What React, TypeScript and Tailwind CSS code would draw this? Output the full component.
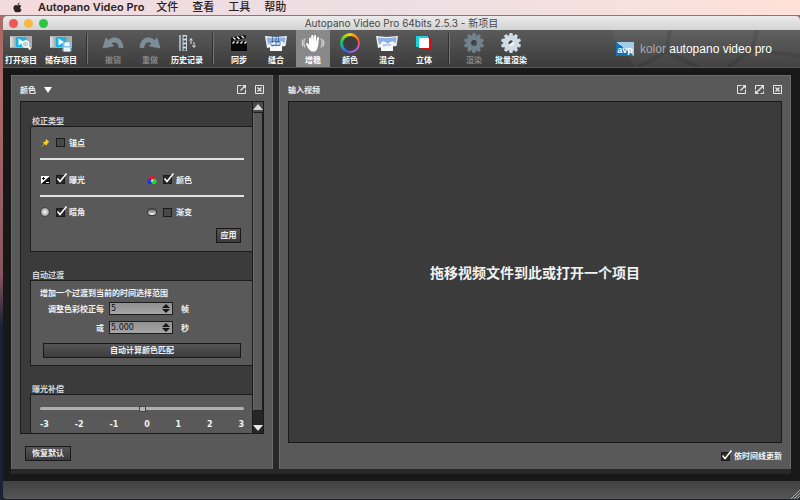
import { useState, type ReactNode } from "react";
import { FaApple } from "react-icons/fa";
import clsx from "clsx";

function FilmIcon({ children }: { children?: ReactNode }) {
  return (
    <svg viewBox="0 0 24 18" className="h-[18px] w-6">
      <defs>
        <linearGradient id="film" x1="0" x2="1">
          <stop offset="0" stopColor="#e2e6e8" />
          <stop offset=".35" stopColor="#8b9499" />
          <stop offset="1" stopColor="#aab0b4" />
        </linearGradient>
      </defs>
      <path d="M1 2h22v12H1z" fill="url(#film)" />
      <path d="M1 2.500h22M1 13.500h22" stroke="#a9b1b5" />
      <path d="M7 3h10v10H7z" fill="#18b4e4" />
      <path d="M9.500 4.500l5.500 3.500-5.500 3.500z" fill="#fff" />
      {children}
    </svg>
  );
}

function OpenIcon() {
  return (
    <FilmIcon>
      <path d="M18.500 12l3 3.500" stroke="#f2f2f2" strokeWidth="2" />
      <circle cx="16.500" cy="10" r="3.200" fill="#c3d3d9" stroke="#fff" strokeWidth="1.200" />
    </FilmIcon>
  );
}

function SaveIcon() {
  return (
    <FilmIcon>
      <path d="M13.500 8.500h9v9h-9z" fill="#86bfe3" />
      <path d="M15.500 8.500h5v3.500h-5z" fill="#f4fafd" />
      <path d="M15 13.500h6v4h-6z" fill="#eaf3f9" />
    </FilmIcon>
  );
}

function UndoIcon({ flip }: { flip?: boolean }) {
  return (
    <svg viewBox="0 0 24 18" className={clsx("h-[18px] w-6", flip && "-scale-x-100")}>
      <path
        d="M2 14L5 4l2.500 2.500C11 3 16 3 19 6c2 2 3 4.500 3 7.500h-4c0-2.500-.8-4-2.500-5-2-1-3.800-.5-5.200.8L12.500 12z"
        fill="#7a8d99"
        stroke="#91a2ac"
        strokeWidth=".5"
      />
    </svg>
  );
}

function HistoryIcon() {
  return (
    <svg viewBox="0 0 24 18" className="h-[18px] w-6">
      <path d="M5 1v16" stroke="#e4e8eb" strokeWidth="1.200" />
      <path d="M7.500 1h4.500v16H7.500z" fill="#c9d6df" />
      <path d="M8.500 2.500h2.500v2H8.500zM8.500 6.500h2.500v2H8.500zM8.500 10.500h2.500v2H8.500zM8.500 14.500h2.500v2H8.500z" fill="#39444c" />
      <path d="M16 5v5M14.500 6.500L16 4.500l1.500 2M19 8v5M17.500 11.500l1.500 2 1.500-2" fill="none" stroke="#e2e2e2" />
    </svg>
  );
}

function ClapIcon() {
  return (
    <svg viewBox="0 0 24 18" className="h-[18px] w-6">
      <path d="M4 7h16v10H4z" fill="#080808" />
      <path d="M4 3.500L18.500 1l.8 3L4.500 7z" fill="#080808" />
      <path d="M6 3.500l2.500 2M10 2.800l2.500 2M14.500 2l2.500 2" stroke="#eee" strokeWidth="1.500" />
      <path d="M5.500 9.500l2-2M9.500 9.500l2-2M13.500 9.500l2-2M17.500 9.500l2-2" stroke="#eee" strokeWidth="1.500" />
    </svg>
  );
}

function PhotosIcon({ merged }: { merged?: boolean }) {
  return (
    <svg viewBox="0 0 24 18" className="h-[18px] w-6">
      <path d="M1 2l11 1v9l-9 2z" fill="#f2f5f9" />
      <path d="M11 3l12-1-1.500 10-10 1z" fill="#eef2f8" />
      <path d="M6 8h12v9H6z" fill="#f6f8fa" />
      <path d="M2.500 3.500L12 4v5l-4-2-4 4zM12 4l9.500-.8-.8 6L17 7l-5 3z" fill="#8fb0e3" />
      <path d="M8 10h8v2l-4-.5-4 1.500z" fill="#b3c8ec" />
      {!merged && (
        <path d="M8.500 9V2.500h6V9M7 11.500V7.500h9v4zM12 3v9" fill="none" stroke="#4a6396" strokeWidth=".8" />
      )}
    </svg>
  );
}

function HandIcon() {
  return (
    <svg viewBox="0 0 24 18" className="h-[18px] w-6">
      <path
        d="M8 10V4.500a1 1 0 0 1 2 0V8l.3-6a1 1 0 0 1 2 0V7.500l.7-5.500a1 1 0 0 1 2 0V8l1-4a1 1 0 0 1 2 0l-.6 6c-.2 3-1.500 6.500-3.400 7.500h-3.500C8 16 6 12.500 5 10c0-1.500 1.700-1.500 3 1z"
        fill="#fff"
      />
      <path d="M4 4.500c-1.500 2.500-1.500 6 0 9M2 5.500c-1 2-1 5 0 7M20 4.500c1.500 2.500 1.500 6 0 9M22 5.500c1 2 1 5 0 7" fill="none" stroke="#eee" strokeWidth=".9" />
    </svg>
  );
}

function RingIcon() {
  return (
    <span className="flex h-5 w-5 items-center justify-center rounded-full bg-[conic-gradient(#ffd400,#ff8a00,#ff4a30,#b55cf0,#c45cff,#3a5cff,#1c9cd8,#1fc34a,#7ddb20,#ffd400)]">
      <span className="h-[15px] w-[15px] rounded-full bg-[#3d3d3f]" />
    </span>
  );
}

function StereoIcon() {
  return (
    <svg viewBox="0 0 24 18" className="h-[18px] w-6">
      <path d="M9 4h11v12H9z" fill="#d81010" />
      <path d="M4 2h12v11H4z" fill="#19d3dc" />
      <path d="M7 4h10v10H7z" fill="#fff" />
    </svg>
  );
}

const teeth = [0, 36, 72, 108, 144, 180, 216, 252, 288, 324];

function GearIcon({ dim }: { dim?: boolean }) {
  const fill = dim ? "#72828c" : "#cfdce5";
  return (
    <svg viewBox="0 0 24 20" className="h-5 w-6">
      {teeth.map((angle) => (
        <path key={angle} d="M9.800 3.500L10.600 0h2.800l.8 3.500z" fill={fill} transform={`rotate(${angle} 12 10)`} />
      ))}
      <circle cx="12" cy="10" r="7.800" fill={fill} />
      <circle cx="12" cy="10" r="3" fill={dim ? "#474b4e" : "#f3f7fa"} />
      <path d="M10 11.500a2.500 2.500 0 0 1 4-3z" fill="#3c4145" />
    </svg>
  );
}

type Tool = { label: string; icon: ReactNode; disabled?: boolean; active?: boolean };

const toolGroups: Tool[][] = [
  [
    { label: "打开项目", icon: <OpenIcon /> },
    { label: "储存项目", icon: <SaveIcon /> },
  ],
  [
    { label: "撤销", icon: <UndoIcon />, disabled: true },
    { label: "重做", icon: <UndoIcon flip />, disabled: true },
    { label: "历史记录", icon: <HistoryIcon /> },
  ],
  [
    { label: "同步", icon: <ClapIcon /> },
    { label: "缝合", icon: <PhotosIcon /> },
    { label: "增稳", icon: <HandIcon />, active: true },
    { label: "颜色", icon: <RingIcon /> },
    { label: "混合", icon: <PhotosIcon merged /> },
    { label: "立体", icon: <StereoIcon /> },
  ],
  [
    { label: "渲染", icon: <GearIcon dim />, disabled: true },
    { label: "批量渲染", icon: <GearIcon /> },
  ],
];

function Toolbar() {
  return (
    <div className="relative flex h-[38px] shrink-0 items-stretch border-b border-[#2f5f93] bg-linear-to-b from-[#5a5a5a] to-[#3c3c3c] pl-px">
      <svg viewBox="0 0 190 37" className="absolute top-0 right-0 h-[37px] w-[190px]">
        <path d="M4 0h186v37H26L2 6z" fill="#fff" opacity=".04" />
        <path d="M60 0l-4 22-28 15M56 22l32 15M147 0l-5 20-24 17M142 20l48 6" fill="none" stroke="#000" strokeWidth="4" opacity=".09" />
      </svg>
      {toolGroups.map((group, i) => (
        <div key={i} className="flex">
          {i > 0 && (
            <div className={clsx("my-[3px] w-0.5 border-r border-[#747474] bg-[#2f2f2f]", i === 3 ? "mx-[7px]" : "mx-2")} />
          )}
          <div className={clsx("flex", i === 0 ? "gap-1.5" : "gap-[3px]")}>
            {group.map((tool) => (
              <button
                key={tool.label}
                disabled={tool.disabled}
                className={clsx(
                  "flex w-[34px] flex-col items-center whitespace-nowrap pt-[3px] font-bold",
                  tool.active && "bg-[#898989]",
                  tool.disabled ? "text-[#858585]" : "text-white"
                )}
              >
                <span className="flex h-5 items-center justify-center">{tool.icon}</span>
                <span className="leading-[14px]">{tool.label}</span>
              </button>
            ))}
          </div>
        </div>
      ))}
      <div className="relative mr-7 ml-auto flex items-center gap-1.5 text-[12px] text-[#a9a9a9] [font-family:'Liberation_Sans',Arial,sans-serif]">
        <span className="flex h-[14px] w-[18px] items-end justify-center bg-linear-to-tr from-[#1173b5] from-50% to-[#9fcdea] to-50% text-[9px] leading-[12px] font-bold text-white">
          avp
        </span>
        <span>
          kolor <span className="text-white">autopano video pro</span>
        </span>
      </div>
    </div>
  );
}

function PopOutIcon() {
  return (
    <svg viewBox="0 0 9 9" className="h-[9px] w-[9px]" fill="none" stroke="#e6e6e6">
      <path d="M4.500 .5h-4v8h8v-4" />
      <path d="M3.500 5.500l4-4" strokeWidth="1.300" />
      <path d="M5 0h4v4z" fill="#e6e6e6" stroke="none" />
    </svg>
  );
}

function ExpandIcon() {
  return (
    <svg viewBox="0 0 9 9" className="h-[9px] w-[9px]" fill="none" stroke="#e6e6e6">
      <path d="M.5 .5h8v8h-8z" strokeDasharray="5 2" />
      <path d="M2 7l5-5" strokeWidth="1.500" />
      <path d="M5 0h4v4zM0 5v4h4z" fill="#e6e6e6" stroke="none" />
    </svg>
  );
}

function CloseIcon() {
  return (
    <svg viewBox="0 0 9 9" className="h-[9px] w-[9px]" fill="none" stroke="#e6e6e6">
      <path d="M.5 .5h8v8h-8z" />
      <path d="M2.500 2.500l4 4M6.500 2.500l-4 4" strokeWidth="1.300" />
    </svg>
  );
}

function Check({ label, checked = false }: { label: string; checked?: boolean }) {
  const [on, setOn] = useState(checked);
  return (
    <label className="flex items-center gap-1">
      <span className="relative flex">
        <input
          type="checkbox"
          checked={on}
          onChange={() => setOn(!on)}
          className={clsx("h-[9px] w-[9px] appearance-none border border-[#1b1b1b]", on ? "bg-[#2a2a2a]" : "bg-[#484848]")}
        />
        {on && (
          <svg viewBox="0 0 12 11" className="pointer-events-none absolute -top-0.5 left-0 h-[11px] w-3">
            <path d="M1.500 5.500L4 8.500l6.500-8" fill="none" stroke="#fff" strokeWidth="1.500" />
          </svg>
        )}
      </span>
      {label}
    </label>
  );
}

function PinIcon() {
  return (
    <svg viewBox="0 0 10 10" className="h-2.5 w-2.5">
      <path d="M2 8.500L4.500 6" stroke="#d8ae1c" />
      <path d="M6 1l3.500 3-1.500.5L6.500 7.500 2.500 4.500l3-1z" fill="#ffd21c" />
    </svg>
  );
}

function ExposureIcon() {
  return (
    <svg viewBox="0 0 10 10" className="h-2.5 w-2.5">
      <path d="M1 1h9v8H1z" fill="#111" />
      <path d="M1 1h9L1 9z" fill="#fff" />
      <path d="M3.500 2v3M2 3.500h3" stroke="#111" />
      <path d="M6 7.500h3" stroke="#fff" />
    </svg>
  );
}

function RgbIcon() {
  return (
    <svg viewBox="0 0 10 10" className="h-2.5 w-2.5">
      <circle cx="5" cy="3.500" r="2.700" fill="#f0142c" />
      <circle cx="3.200" cy="6.500" r="2.700" fill="#2030f0" />
      <circle cx="6.900" cy="6.500" r="2.700" fill="#1ddc2a" />
      <circle cx="5" cy="5.500" r="1" fill="#fff" />
    </svg>
  );
}

function Group({ title, className, children }: { title: string; className?: string; children: ReactNode }) {
  return (
    <fieldset className="pl-[9px]">
      <legend className="pl-0.5 leading-[10px] text-[#d6d6d6]">{title}</legend>
      <div className={clsx("border border-r-0 border-[#1c1c1c] bg-[#595959] pr-2 pl-[9px]", className)}>{children}</div>
    </fieldset>
  );
}

const darkButton =
  "border border-[#191919] bg-linear-to-b from-[#555] to-[#3c3c3c] leading-[13px] font-bold text-[#f0f0f0]";

function Spinner({ id, label, unit, value }: { id: string; label: string; unit: string; value: string }) {
  const [text, setText] = useState(value);
  return (
    <div className="flex h-[19px] items-center">
      <label htmlFor={id} className="w-16 text-right">
        {label}
      </label>
      <div className="ml-[5px] flex h-[13px] w-16 items-center border border-[#1d1d1d] bg-linear-to-b from-[#919191] to-[#a6a6a6]">
        <input
          id={id}
          value={text}
          onChange={(e) => setText(e.target.value)}
          className="min-w-0 flex-1 pl-px font-normal text-[#111] outline-none [font-family:'DejaVu_Sans',sans-serif]"
        />
        <div className="flex w-3 flex-col items-center gap-px">
          <button aria-label={`增加${unit}`} className="block">
            <svg viewBox="0 0 8 4" className="block h-1 w-2"><path d="M0 4l4-4 4 4z" fill="#161616" /></svg>
          </button>
          <button aria-label={`减少${unit}`} className="block">
            <svg viewBox="0 0 8 4" className="block h-1 w-2"><path d="M0 0l4 4 4-4z" fill="#161616" /></svg>
          </button>
        </div>
      </div>
      <span className="ml-2">{unit}</span>
    </div>
  );
}

function ColorPanel() {
  const [shift, setShift] = useState(0);
  return (
    <section className="flex w-[262px] shrink-0 flex-col border border-b-0 border-[#6b6b6b] bg-[#595959] px-2">
      <header className="flex h-[25px] items-center pt-0.5">
        <h2 className="mr-2">颜色</h2>
        <svg viewBox="0 0 8 6" className="h-1.5 w-2"><path d="M0 0h8L4 6z" fill="#fff" /></svg>
        <div className="ml-auto flex gap-[9px]">
          <button aria-label="弹出"><PopOutIcon /></button>
          <button aria-label="关闭"><CloseIcon /></button>
        </div>
      </header>
      <div className="flex h-[333px] border border-[#1a1a1a] bg-[#3b3b3b]">
        <div className="flex min-w-0 flex-1 flex-col gap-[18px] overflow-hidden pt-[14px]">
          <Group title="校正类型" className="h-[126px]">
            <div className="flex h-[31px] items-center gap-1.5"><PinIcon /><Check label="锚点" /></div>
            <hr className="border-t-2 border-[#e2e2e2]" />
            <div className="grid h-[35px] grid-cols-2 items-center pt-1">
              <div className="flex items-center gap-1.5"><ExposureIcon /><Check label="曝光" checked /></div>
              <div className="ml-[5px] flex items-center gap-1.5"><RgbIcon /><Check label="颜色" checked /></div>
            </div>
            <hr className="border-t-2 border-[#e2e2e2]" />
            <div className="grid h-[30px] grid-cols-2 items-center">
              <div className="flex items-center gap-1.5">
                <span className="h-2.5 w-2.5 rounded-full border border-[#444] bg-radial from-white to-[#777]" />
                <Check label="暗角" checked />
              </div>
              <div className="ml-[5px] flex items-center gap-1.5">
                <span className="h-2 w-2.5 rounded-full border border-[#333] bg-linear-to-b from-[#555] to-white" />
                <Check label="渐变" />
              </div>
            </div>
            <div className="flex justify-end pt-px pr-[3px]">
              <button className={clsx(darkButton, "w-[25px]")}>应用</button>
            </div>
          </Group>
          <Group title="自动过渡" className="h-[86px] pt-1.5">
            <p className="leading-3">增加一个过渡到当前的时间选择范围</p>
            <Spinner id="frames" label="调整色彩校正每" unit="帧" value="5" />
            <Spinner id="seconds" label="或" unit="秒" value="5.000" />
            <div className="px-[3px] pt-1.5">
              <button className={clsx(darkButton, "w-full")}>自动计算颜色匹配</button>
            </div>
          </Group>
          <Group title="曝光补偿" className="h-[60px] pt-3">
            <input
              type="range"
              min={-3}
              max={3}
              step={0.1}
              value={shift}
              onChange={(e) => setShift(Number(e.target.value))}
              aria-label="曝光补偿"
              className="block h-[3px] w-full appearance-none rounded-full bg-[#b0b0b0] [&::-webkit-slider-thumb]:h-[6px] [&::-webkit-slider-thumb]:w-[7px] [&::-webkit-slider-thumb]:appearance-none [&::-webkit-slider-thumb]:border [&::-webkit-slider-thumb]:border-[#444] [&::-webkit-slider-thumb]:bg-[#b5b5b5]"
            />
            <div className="flex justify-between pt-[9px] leading-3 [font-family:'DejaVu_Sans',sans-serif]">
              {["-3", "-2", "-1", "0", "1", "2", "3"].map((n) => (
                <span key={n}>{n}</span>
              ))}
            </div>
          </Group>
        </div>
        <div className="flex w-[11px] flex-col border-l border-[#1a1a1a] bg-[#262626]">
          <button aria-label="向上" className="flex h-2.5 items-center justify-center bg-[#4a4a4a]">
            <svg viewBox="0 0 10 6" className="h-1.5 w-2.5"><path d="M0 6l5-6 5 6z" fill="#d6d6d6" /></svg>
          </button>
          <div className="h-[299px] border border-[#1c1c1c] border-l-[#6b6b6b] bg-[#595959]" />
          <button aria-label="向下" className="mt-auto flex h-2.5 items-center justify-center">
            <svg viewBox="0 0 10 6" className="h-1.5 w-2.5"><path d="M0 0h10L5 6z" fill="#e6e6e6" /></svg>
          </button>
        </div>
      </div>
      <footer className="px-[5px] pt-3">
        <button className={clsx(darkButton, "w-[46px]")}>恢复默认</button>
      </footer>
    </section>
  );
}

function VideoPanel() {
  return (
    <section className="flex min-w-0 flex-1 flex-col border border-b-0 border-[#6b6b6b] bg-[#595959] px-2">
      <header className="flex h-[25px] items-center pt-0.5">
        <h2>输入视频</h2>
        <div className="ml-auto flex gap-[9px]">
          <button aria-label="弹出"><PopOutIcon /></button>
          <button aria-label="展开"><ExpandIcon /></button>
          <button aria-label="关闭"><CloseIcon /></button>
        </div>
      </header>
      <div className="flex flex-1 items-center justify-center border border-[#1a1a1a] bg-[#3b3b3b] text-[14px]">
        拖移视频文件到此或打开一个项目
      </div>
      <footer className="flex h-[26px] items-center justify-end">
        <Check label="依时间线更新" checked />
      </footer>
    </section>
  );
}

export default function App() {
  return (
    <div className="flex min-h-screen flex-col bg-linear-to-b from-[#a96a68] from-20% via-[#8a5560] via-55% to-[#1b2333] to-65% text-[8px] [font-family:Inter,'Noto_Sans_CJK_SC',sans-serif]">
      <nav className="flex h-[15px] items-center bg-linear-to-r from-[#f3dadd] via-[#ecdfe4] to-[#ffe1d8] pl-3 text-[11px] leading-[15px] text-[#2c2224]">
        <FaApple className="mr-[15px] h-[11px] w-[11px]" />
        <a href="#app" className="mr-3 font-semibold">Autopano Video Pro</a>
        <div className="flex gap-[14px] font-medium">
          <a href="#file">文件</a>
          <a href="#view">查看</a>
          <a href="#tools">工具</a>
          <a href="#help">帮助</a>
        </div>
      </nav>
      <main className="mt-px mb-px ml-[3px] flex flex-1 flex-col overflow-hidden rounded-[4px] bg-[#181818]">
        <div className="relative flex h-[14px] shrink-0 items-center justify-center bg-linear-to-b from-[#ebebeb] to-[#d3d3d3] text-[10px] leading-[14px] text-[#484848]">
          <div className="absolute left-1.5 flex gap-1.5">
            <button aria-label="关闭窗口" className="h-[9px] w-[9px] rounded-full bg-[#f25654]" />
            <button aria-label="最小化" className="h-[9px] w-[9px] rounded-full bg-[#f8b93c]" />
            <button aria-label="缩放" className="h-[9px] w-[9px] rounded-full bg-[#2fc544]" />
          </div>
          <h1>Autopano Video Pro 64bits 2.5.3 - 新项目</h1>
        </div>
        <Toolbar />
        <div className="flex flex-1 gap-1.5 border-t-[7px] border-r-[9px] border-b-[7px] border-l-8 border-[#181818] bg-[#282828] pb-[5px] font-bold text-[#f2f2f2]">
          <ColorPanel />
          <VideoPanel />
        </div>
        <footer className="flex h-[18px] shrink-0 items-end justify-end bg-linear-to-b from-[#414141] to-[#565656]">
          <svg viewBox="0 0 9 9" className="h-[9px] w-[9px]">
            <path d="M0 9l9-9M3 9l6-6M6 9l3-3" stroke="#aaa" />
          </svg>
        </footer>
      </main>
    </div>
  );
}
